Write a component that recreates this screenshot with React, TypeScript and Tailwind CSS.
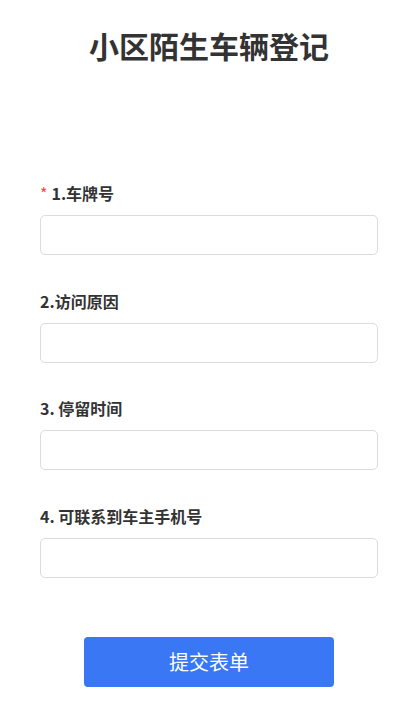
const fields = [
  { label: '1.车牌号', required: true },
  { label: '2.访问原因', required: false },
  { label: '3. 停留时间', required: false },
  { label: '4. 可联系到车主手机号', required: false },
]

export default function App() {
  return (
    <div
      className="min-h-[707px] w-full bg-white px-[40px] text-[#333333]"
      style={{ fontFamily: '"Noto Sans CJK SC", "Noto Sans", sans-serif' }}
    >
      <h1 className="pt-[25px] text-center text-[30px] font-bold leading-[40px]">
        小区陌生车辆登记
      </h1>

      <form className="mt-[116px]" onSubmit={(e) => e.preventDefault()}>
        {fields.map((f) => (
          <div key={f.label} className="mb-[33.5px]">
            <label className="flex items-center text-[16px] font-bold leading-[24px]">
              {f.required && (
                <span className="mr-[4px] text-[16px] font-normal text-[#f5484b]">*</span>
              )}
              {f.label}
            </label>
            <input
              type="text"
              className="mt-[10px] block h-[40px] w-full rounded-[5px] border border-[#dcdcdc] bg-white px-3 outline-none"
            />
          </div>
        ))}

        <div className="flex justify-center pt-[26px]">
          <button
            type="submit"
            className="h-[50px] w-[250px] rounded-[4px] bg-[#3a77f5] text-[20px] text-white"
          >
            提交表单
          </button>
        </div>
      </form>
    </div>
  )
}
